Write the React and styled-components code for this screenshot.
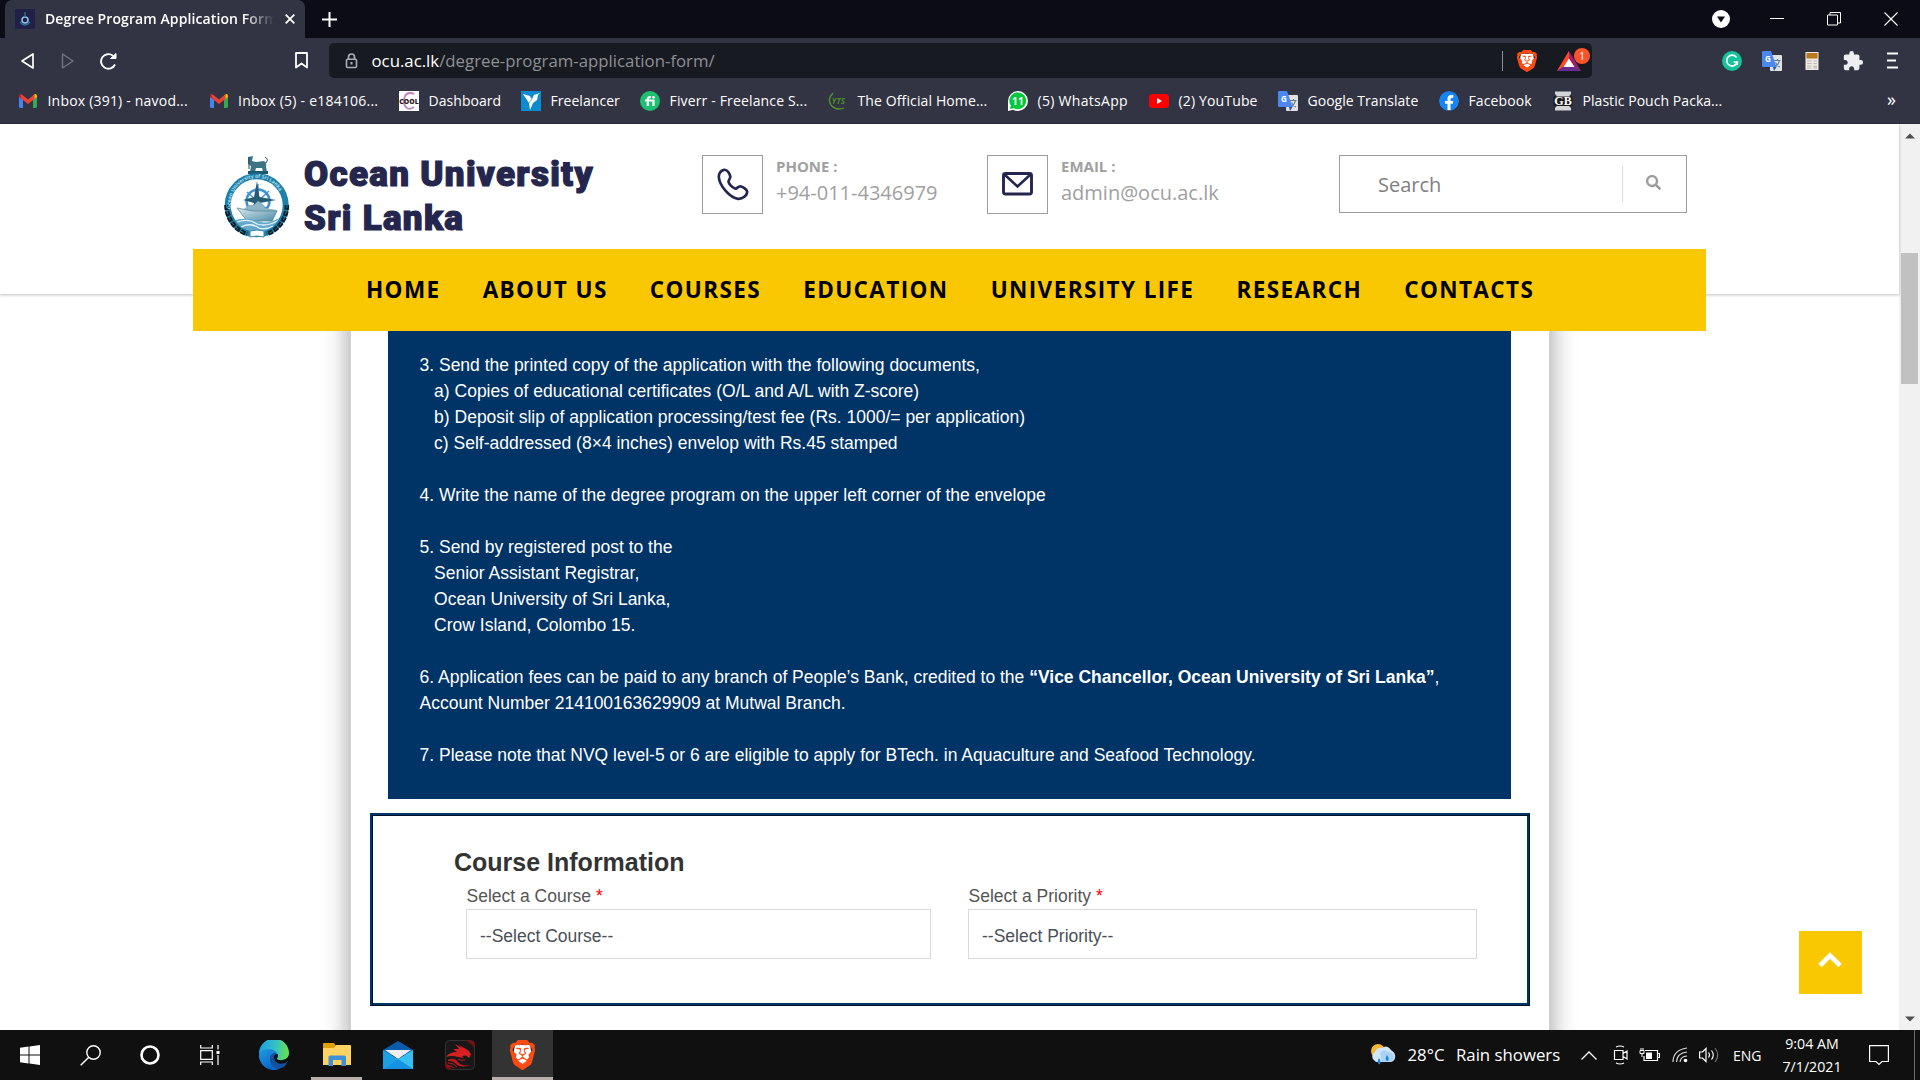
import React from "react";
import styled, { createGlobalStyle } from "styled-components";
import { SiBrave } from "react-icons/si";
import { FaFacebook, FaSearch } from "react-icons/fa";
import { MdExtension } from "react-icons/md";

const GlobalStyle = createGlobalStyle`
  * { box-sizing: border-box; }
  html, body { margin: 0; padding: 0; background: #fff; overflow: hidden; }
  svg { display: block; flex: none; }
`;

const ui = `"Open Sans", "Noto Sans", sans-serif`;
const arial = `"Liberation Sans", Arial, sans-serif`;

const Screen = styled.div`
  width: 1920px;
  height: 1080px;
  display: flex;
  flex-direction: column;
  overflow: hidden;
  font-family: ${ui};
`;

/* ---------- browser chrome ---------- */

const TabStrip = styled.div`
  height: 38px;
  flex: none;
  background: #0b0c15;
  display: flex;
  align-items: stretch;
  padding-left: 5px;
`;

const Tab = styled.div`
  width: 300px;
  background: #323443;
  border-radius: 7px 7px 0 0;
  display: flex;
  align-items: center;
  padding: 0 10px;
`;

const TabTitle = styled.div`
  width: 229px;
  margin: 0 11px 0 10px;
  padding-bottom: 2px;
  font-size: 14px;
  font-weight: 600;
  letter-spacing: 0.1px;
  color: #fff;
  white-space: nowrap;
  overflow: hidden;
  mask-image: linear-gradient(to right, #000 198px, transparent 229px);
`;

const NewTab = styled.div`
  display: flex;
  align-items: center;
  margin-left: 16px;
`;

const WindowButtons = styled.div`
  margin-left: auto;
  display: flex;
  align-items: center;
  gap: 43px;
  padding-right: 22px;
`;

const ProfileButton = styled.div`
  margin-right: -3px;
`;

const Toolbar = styled.div`
  height: 45px;
  flex: none;
  background: #323443;
  display: flex;
  align-items: center;
  padding: 0 22px 0 20px;
`;

const NavButtons = styled.div`
  width: 275px;
  display: flex;
  align-items: center;
  gap: 25px;
`;

const AddressBar = styled.div`
  width: 1263px;
  height: 35px;
  margin-left: 21px;
  border-radius: 5px;
  background: #181a21;
  display: flex;
  align-items: center;
  padding: 0 11px 0 16px;
`;

const Url = styled.div`
  margin-left: 13.500px;
  font-size: 16.8px;
  line-height: 34px;
  color: #fff;
  flex: 1;
`;

const UrlPath = styled.span`
  color: #8e9095;
`;

const AddressDivider = styled.div`
  width: 1px;
  height: 20px;
  background: #8c8d92;
  margin-right: 14px;
`;

const RewardsButton = styled.div`
  position: relative;
  margin-left: 20px;
  width: 24px;
`;

const Badge = styled.div`
  position: absolute;
  left: 17px;
  top: -3px;
  width: 16px;
  height: 16px;
  border-radius: 50%;
  background: #fb542b;
  color: #fff;
  font-size: 10px;
  line-height: 16px;
  text-align: center;
`;

const Extensions = styled.div`
  margin-left: auto;
  display: flex;
  align-items: center;
  gap: 20px;
`;

const MenuButton = styled.div`
  margin-left: 2px;
`;

const BookmarkBar = styled.div`
  height: 41px;
  flex: none;
  background: #323443;
  border-bottom: 1px solid #2a2c38;
  display: flex;
  align-items: center;
  padding: 0 20px 5px 18px;
`;

const Bookmark = styled.div`
  width: ${(p) => p.$w}px;
  display: flex;
  align-items: center;
  gap: 9.500px;
  color: #fff;
  font-size: 14px;
  letter-spacing: ${(p) => p.$track || 0}px;
  white-space: nowrap;
`;

const BookmarkLabel = styled.span`
  padding-bottom: 1px;
`;

const MoreMark = styled.div`
  margin-left: auto;
  color: #fff;
  font-size: 18px;
  line-height: 20px;
  padding-bottom: 3px;
  margin-right: 4px;
`;

/* ---------- page ---------- */

const Viewport = styled.div`
  height: 906px;
  flex: none;
  display: flex;
  overflow: hidden;
`;

const Page = styled.div`
  position: relative;
  width: 1899px;
  background: #fff;
`;

const ScrollTrack = styled.div`
  width: 21px;
  background: #f1f1f1;
  display: flex;
  flex-direction: column;
  align-items: center;
  justify-content: space-between;
  padding: 9px 0 8px;
`;

const ScrollThumb = styled.div`
  width: 17px;
  height: 131px;
  background: #c1c1c1;
  margin: 114px 0 auto;
`;

const Header = styled.header`
  position: relative;
  z-index: 2;
  height: 170px;
  background: #fff;
  box-shadow: 0 1px 3px rgba(0, 0, 0, 0.25);
`;

const HeaderTop = styled.div`
  height: 125px;
  display: flex;
  align-items: flex-start;
  padding: 31px 0 0 224px;
`;

const Logo = styled.div`
  width: 478px;
  display: flex;
`;

const LogoText = styled.div`
  margin: -2px 0 0 12px;
  font-family: Roboto, ${arial};
  font-weight: 900;
  font-size: 35px;
  line-height: 44px;
  letter-spacing: 1.3px;
  color: #25264e;
  -webkit-text-stroke: 1.2px #25264e;
`;

const Contact = styled.div`
  width: ${(p) => p.$w}px;
  display: flex;
`;

const ContactIcon = styled.div`
  width: 61px;
  height: 59px;
  border: 1px solid #9c9c9c;
  display: flex;
  align-items: center;
  justify-content: center;
`;

const ContactText = styled.div`
  margin: 1px 0 0 13px;
  color: #a0a0a0;
`;

const ContactLabel = styled.div`
  font-size: 15px;
  font-weight: 700;
  line-height: 20px;
`;

const ContactValue = styled.div`
  margin-top: 3px;
  font-size: 20px;
  line-height: 28px;
`;

const SearchBox = styled.div`
  width: 348px;
  height: 58px;
  border: 1px solid #9c9c9c;
  display: flex;
  align-items: center;
  padding: 0 25px 0 38px;
`;

const SearchText = styled.div`
  flex: 1;
  padding-top: 2px;
  font-size: 20px;
  line-height: 28px;
  color: #808080;
`;

const SearchDivider = styled.div`
  width: 1px;
  height: 36px;
  background: #dcdcdc;
  margin-right: 23px;
`;

const SearchIcon = styled.div`
  padding-bottom: 3px;
`;

const MainNav = styled.nav`
  width: 1513px;
  height: 82px;
  margin-left: 193px;
  background: #f9c802;
  display: flex;
  align-items: center;
  gap: 42.100px;
  padding: 0 0 2px 173px;
`;

const NavLink = styled.a`
  font-size: 22.5px;
  font-weight: 700;
  letter-spacing: 1.4px;
  color: #000;
  white-space: nowrap;
`;

const Article = styled.main`
  width: 1200px;
  height: 760px;
  margin-left: 350px;
  border: solid #d2d2d2;
  border-width: 0 1px;
  background: #fff;
  box-shadow: 0 0 25px rgba(0, 0, 0, 0.4);
`;

const Instructions = styled.section`
  width: 1123px;
  margin-left: 37px;
  padding: 58px 30px 31px 31.500px;
  background: #003366;
  color: #fff;
  font-family: ${arial};
  font-size: 17.5px;
  line-height: 26px;
  white-space: nowrap;
`;

const Item = styled.div`
  & + & {
    margin-top: 26px;
  }
`;

const Line = styled.div`
  padding-left: ${(p) => (p.$indent ? 14.6 : 0)}px;
`;

const FormSection = styled.section`
  width: 1160px;
  height: 193px;
  margin: 14px 0 0 19px;
  border-style: solid;
  border-width: 2px 1px 1px 2px;
  border-color: #003366 #00132b #00132b #003366;
  box-shadow: inset 1px 1px 0 #00132b, inset -2px -2px 0 #003366;
  padding: 32px 0 0 82px;
  font-family: ${arial};
`;

const FormTitle = styled.h2`
  margin: 0 0 6px;
  font-size: 25px;
  line-height: 30px;
  color: #333;
`;

const Fields = styled.div`
  display: grid;
  grid-template-columns: 465px 509px;
  column-gap: 37px;
  padding-left: 12px;
`;

const FieldLabel = styled.div`
  padding-left: 0.5px;
  font-size: 17.5px;
  line-height: 26px;
  color: #555;
`;

const Required = styled.span`
  color: #f00;
`;

const Select = styled.div`
  height: 50px;
  border: 1px solid #dadada;
  padding: 2px 0 0 13px;
  font-size: 17.5px;
  line-height: 48px;
  color: #495057;
`;

const ToTop = styled.button`
  position: absolute;
  right: 37px;
  bottom: 36px;
  width: 63px;
  height: 63px;
  border: 0;
  padding: 0 1px 5px 0;
  background: #f9c802;
  display: flex;
  align-items: center;
  justify-content: center;
`;

/* ---------- taskbar ---------- */

const Taskbar = styled.footer`
  height: 50px;
  flex: none;
  background: #101010;
  display: flex;
  color: #fff;
`;

const TaskButton = styled.div`
  width: ${(p) => p.$w || 60}px;
  margin-right: ${(p) => p.$mr || 0}px;
  padding-top: 3px;
  display: flex;
  align-items: center;
  justify-content: center;
  background: ${(p) => (p.$active ? "#333333" : "transparent")};
  border-bottom: 3px solid ${(p) => (p.$open ? "#b7aeac" : "transparent")};
`;

const Tray = styled.div`
  margin-left: auto;
  display: flex;
  align-items: center;
`;

const Weather = styled.div`
  display: flex;
  align-items: center;
  gap: 11.500px;
  font-size: 16.8px;
  padding-bottom: 1px;
  margin-right: 20px;
  width: 191px;
  white-space: nowrap;
`;

const TrayIcon = styled.div`
  width: ${(p) => p.$w}px;
`;

const Language = styled.div`
  width: 48px;
  font-size: 14px;
`;

const Clock = styled.div`
  width: 62px;
  font-size: 14.2px;
  line-height: 23px;
  text-align: center;
`;

const Notifications = styled.div`
  margin-left: 26px;
  width: 45px;
`;

const DesktopEdge = styled.div`
  width: 6px;
  height: 50px;
  border-left: 1px solid #6b6b6b;
`;

/* ---------- drawings ---------- */

const BraveMark = ({ w, h }) => (
  <svg width={w} height={h} viewBox="2 0 20 24" preserveAspectRatio="none">
    <path d="M6 4H18L19 10L15 19L12 21L9 19L5 10Z" fill="#fff" />
    <SiBrave size={24} color="#fb4b14" />
  </svg>
);

const Gmail = () => (
  <svg width="20" height="20" viewBox="0 0 20 20">
    <path d="M1 5V15.5Q1 17 2.5 17H5V8.500Z" fill="#4285f4" />
    <path d="M19 5V15.5Q19 17 17.500 17H15V8.500Z" fill="#34a853" />
    <path d="M15 4.500V9L19 6V5Q19 3 17.200 3Z" fill="#fbbc04" />
    <path d="M5 4.500V9L1 6V5Q1 3 2.800 3Z" fill="#c5221f" />
    <path d="M2.500 3L5 4.500L10 8.400L15 4.500L16.500 3.300V8L10 13L3.500 8Z" fill="#ea4335" />
  </svg>
);

const DashboardMark = () => (
  <svg width="20" height="20" viewBox="0 0 20 20">
    <rect width="20" height="20" fill="#fff" />
    <path d="M15 3Q9 0 6 5Q3 13 8 17Q11 19 15 16" fill="none" stroke="#c48abd" strokeWidth="2" />
    <text x="10" y="13" textAnchor="middle" fontFamily="Open Sans" fontSize="6.800" fontWeight="800" fill="#301824">COOL</text>
  </svg>
);

const FreelancerMark = () => (
  <svg width="20" height="20" viewBox="0 0 20 20">
    <rect width="20" height="20" fill="#0e8bce" />
    <path d="M2 3L9 5L11 8L13 4L19 2L17 4L16 9L12 12L9 19L8 12Z" fill="#fff" />
    <path d="M9 5L11 8L8 12" fill="none" stroke="#0e8bce" strokeWidth=".6" />
  </svg>
);

const FiverrMark = () => (
  <svg width="20" height="20" viewBox="0 0 20 20">
    <circle cx="10" cy="10" r="10" fill="#1dbf73" />
    <path d="M5 9.500H13.500V15M7.800 15V8Q7.800 5.800 11 6.200" fill="none" stroke="#fff" strokeWidth="2.200" />
    <circle cx="13.500" cy="6.300" r="1.300" fill="#fff" />
  </svg>
);

const YtsMark = () => (
  <svg width="20" height="20" viewBox="0 0 20 20">
    <path d="M5 2Q-1 8 3 14Q8 20 16 17" fill="none" stroke="#4f9a2d" strokeWidth="1.300" />
    <text x="10.500" y="13" textAnchor="middle" fontFamily="Open Sans" fontStyle="italic" fontSize="8" fontWeight="700" fill="#4a8b2c">YTS</text>
  </svg>
);

const WhatsAppMark = () => (
  <svg width="20" height="20" viewBox="0 0 20 20">
    <path d="M0 20V10A10 10 0 1 1 10 20Q7 20 5 18.800Z" fill="#fff" />
    <path d="M2 18L2.800 14.500A8.400 8.400 0 1 1 5.800 17.200Z" fill="#00c93c" />
    <text x="10" y="13.800" textAnchor="middle" fontFamily="Open Sans" fontSize="10" fontWeight="700" fill="#fff">11</text>
  </svg>
);

const YouTubeMark = () => (
  <svg width="20" height="20" viewBox="0 0 20 20">
    <rect y="3" width="20" height="14" rx="3.500" fill="#f00" />
    <path d="M8 7V13L13 10Z" fill="#fff" />
  </svg>
);

const TranslateMark = ({ size = 20 }) => (
  <svg width={size} height={size} viewBox="0 0 20 20">
    <rect x="8" y="4" width="12" height="16" rx="1" fill="#dfe1e3" />
    <path d="M12 9.500H18.500M15.500 8V9.500M17.500 9.500Q16.500 14 13 16M13.500 11.500Q15 15 18 16" fill="none" stroke="#5f7f93" strokeWidth="1.100" />
    <path d="M1 0H9L14.500 16H1.500Q0 16 0 14.500V1Q0 0 1 0Z" fill="#4a88f0" />
    <path d="M11 16H14.500L12 20Z" fill="#3050a8" />
    <text x="5.800" y="11" textAnchor="middle" fontFamily="Open Sans" fontSize="8" fontWeight="700" fill="#fff">G</text>
  </svg>
);

const FacebookMark = () => (
  <svg width="20" height="20" viewBox="0 0 20 20">
    <circle cx="10" cy="10" r="9.300" fill="#fff" />
    <FaFacebook size={20} color="#1485f2" />
  </svg>
);

const PouchMark = () => (
  <svg width="20" height="20" viewBox="0 0 20 20">
    <path d="M2 .5H18V3L16.500 4.500V15.500L18 17V19.500H2V17L3.500 15.500V4.500L2 3Z" fill="#d4d5d7" />
    <rect x=".5" y="5.500" width="19" height="9.500" fill="#1c1c1c" />
    <text x="10" y="14" textAnchor="middle" fontFamily="Liberation Serif" fontSize="12" fontWeight="700" fill="#fff">GB</text>
  </svg>
);

const Crest = () => (
  <svg width="68" height="86" viewBox="1 1 68 86">
    <defs>
      <path id="crestArc" d="M8.500 56A26 26 0 1 1 59 56" />
      <linearGradient id="hull" x1="0" y1="0" x2="1" y2="1">
        <stop offset="0" stopColor="#dceaf0" />
        <stop offset="1" stopColor="#4c8ca6" />
      </linearGradient>
    </defs>
    <path d="M25 3L30 2L29 7L33 8L41 7Q44 8 43 13L44 18H40L39 14L33 14L32 18H27L28 12L25 10Z" fill="#3f7487" />
    <path d="M26 3V15M42 3Q46 5 43 9" fill="none" stroke="#1d4c60" strokeWidth="1" />
    <rect x="25" y="17" width="20" height="3" fill="#1c5870" />
    <circle cx="33.700" cy="51.300" r="29" fill="#fff" stroke="#1c80a8" strokeWidth="6" />
    <path d="M3.500 51A30.200 30.200 0 0 0 24 80" fill="none" stroke="#0a1f29" strokeWidth="4.500" strokeDasharray="5 1.200" />
    <path d="M63.900 51A30.200 30.200 0 0 1 44 80" fill="none" stroke="#0a1f29" strokeWidth="4.500" strokeDasharray="5 1.200" />
    <path d="M3.500 51A30.200 30.200 0 0 0 24 80M63.900 51A30.200 30.200 0 0 1 44 80" fill="none" stroke="#2f7f9e" strokeWidth="1" strokeDasharray="3 3.200" />
    <text fontFamily="Open Sans" fontSize="5" fontWeight="700" fill="#b4dcea">
      <textPath href="#crestArc" startOffset="1">Ocean University of Sri Lanka</textPath>
    </text>
    <circle cx="35" cy="47" r="11.500" fill="none" stroke="#3c91d2" strokeWidth="2.500" />
    <path d="M35 30V62M24 38L46 57M46 37L25 56" stroke="#3c91d2" strokeWidth="1.300" />
    <path d="M34 27L36.500 43L53 46L37 49L35 60L31 49L20 46L31 43Z" fill="#275d74" />
    <path d="M21 55L26 51H31L35 47L40 50L42 54L54 56L50 66L23 69Z" fill="#8fb4c4" />
    <path d="M14 54L30 57L54 57L49 67H24Z" fill="url(#hull)" stroke="#4b7f94" strokeWidth=".7" />
    <path d="M12 66Q25 63 34 67Q44 71 56 64Q49 78 34 78Q18 77 12 66Z" fill="#64a9cb" />
    <path d="M14 68Q26 64 34 70Q44 73 54 67M18 73Q28 68 36 74Q43 76 50 72" fill="none" stroke="#e4f3fa" strokeWidth="1.300" />
    <path d="M27 77L34 76L41 77V83L34 82L27 83Z" fill="#fff" stroke="#3b87a5" strokeWidth="1" />
  </svg>
);

const PhoneIcon = () => (
  <svg width="32" height="33" viewBox="0 0 32 33">
    <path
      d="M7 1.800C3.500 2.300 1.600 6 1.800 9C2.500 18 13 29.800 21 30.800C25.500 31.200 30.200 27.500 30.200 23.500C29.500 21 25 18 22.500 18.500C20.500 19 20 21 18 20.500C15 19.500 11.500 15.500 11.500 13.500C11.500 12 13.300 11 13.300 8.500C12.800 6 10.500 1.300 7 1.800Z"
      fill="none" stroke="#25264e" strokeWidth="2.700" />
  </svg>
);

const MailIcon = () => (
  <svg width="31" height="26" viewBox="0 0 31 26">
    <rect x="1.500" y="1.500" width="28" height="20.500" rx="2" fill="none" stroke="#25264e" strokeWidth="2.900" />
    <path d="M2.500 2.500L15.500 14.500L28.500 2.500" fill="none" stroke="#25264e" strokeWidth="2.600" />
  </svg>
);

const Edge = () => (
  <svg width="30" height="30" viewBox="0 0 30 30">
    <defs>
      <linearGradient id="edgeTop" x1="0" y1=".3" x2="1" y2=".4">
        <stop offset="0" stopColor="#1b9de2" />
        <stop offset=".55" stopColor="#35c1c8" />
        <stop offset="1" stopColor="#66e24a" />
      </linearGradient>
      <linearGradient id="edgeSide" x1="0" y1="0" x2=".6" y2="1">
        <stop offset="0" stopColor="#1f9ce5" />
        <stop offset="1" stopColor="#0b63c4" />
      </linearGradient>
    </defs>
    <circle cx="15" cy="15" r="15" fill="#0f4f9e" />
    <path d="M0 14A15 15 0 0 1 30 13Q30 20 22 20.500Q17.500 20.500 18 18.500Q20 16 18 13.500Q14 9 8 10Q2 11 0 14Z" fill="url(#edgeTop)" />
    <path d="M0 15Q2 9 9 9Q16 9 18.500 14Q12 11.500 11 18Q11 26 19 29.400Q16 30 14 30A15 15 0 0 1 0 15Z" fill="url(#edgeSide)" />
    <path d="M30 20Q26 23.500 20 22.500L18 18.800Q19 20.500 22 20.500Q28 20.500 30 15Z" fill="#101010" />
    <path d="M19 29.500Q25 28 28 23L31 19V31H19Z" fill="#101010" />
    <path d="M11 18Q11 26 18 29Q25 28 28 23.500Q20 26 16 20Q15 17 17 14Q12 13 11 18Z" fill="#10529f" />
    <path d="M18.500 14Q15 14 15 17.500Q15.500 22 20 23.500Q24 24.500 28 22L30 18L22 20.500Q17.500 20.500 18 18.500Q19.500 16.500 18.500 14Z" fill="#101010" />
  </svg>
);

const Explorer = () => (
  <svg width="28" height="24" viewBox="0 0 28 24">
    <path d="M0 1Q0 0 1 0H11L13 3V8H0Z" fill="#e0a200" />
    <path d="M0 5H11L13 2H27Q28 2 28 3V22H0Z" fill="#ffd262" />
    <path d="M5.500 23V14Q5.500 12.500 7 12.500H21.500Q23 12.500 23 14V23H18.500V17H10V23Z" fill="#3d92d6" />
  </svg>
);

const MailApp = () => (
  <svg width="30" height="28" viewBox="0 0 30 28">
    <path d="M0 9L15 0L30 9V14H0Z" fill="#0b5cad" />
    <path d="M2 9H28L15 18Z" fill="#eeeef0" />
    <path d="M0 28V9L15 18L30 28Z" fill="#1ba0e6" />
    <path d="M0 28L15 18L30 9V28Z" fill="#36c0f4" />
    <path d="M0 28L15 18L30 28Z" fill="#1593e2" />
  </svg>
);

const Dragon = () => (
  <svg width="30" height="30" viewBox="0 0 30 30">
    <rect x=".5" y=".5" width="29" height="29" rx="4" fill="#181818" stroke="#333" />
    <path d="M20 .5H26Q29.500 1 29.500 5V9Q27 3 20 .5Z" fill="#7d0b12" />
    <path d="M.5 20V26Q1 29.500 5 29.500H8Q3 26 .5 20Z" fill="#7d0b12" />
    <path d="M1 17Q4 12 12 12L8 9L14 9L10 4L17 8L14 5L21 9Q24 10 26 14L24 18L21 15.500L17 16L19 18L13 17Q7 15 1 17Z" fill="#d81f22" />
    <path d="M3 19.500Q10 17 13 22Q16 26.500 26 25Q15 28.500 11 24Q8 20.500 3 21Z" fill="#b9191d" />
    <path d="M3 23Q9 23 12 27M2 26Q6 25 9 28M13 19Q16 21 20 20" stroke="#b9191d" fill="none" />
  </svg>
);

const WeatherIcon = () => (
  <svg width="26" height="21" viewBox="0 0 26 21">
    <circle cx="8" cy="7" r="7" fill="#f7b733" />
    <path d="M5 17A5 5 0 0 1 5 8Q7 3 12 4Q17 0 21 6Q26 9 25 14Q24 18 20 18H6Z" fill="#cfe6fb" />
    <path d="M10 9Q14 4 19 8Q25 10 24 14Q23 18 19 18H12Z" fill="#a9d2f7" />
    <path d="M9 14Q12 18 9.500 20.500Q6 19 9 14ZM17 11Q20 15 17.500 17Q14 16 17 11Z" fill="#1b83dc" />
  </svg>
);

const bookmarks = [
  [190.5, 0.2, <Gmail />, "Inbox (391) - navod..."],
  [190.5, 0.22, <Gmail />, "Inbox (5) - e184106..."],
  [122, 0.05, <DashboardMark />, "Dashboard"],
  [119, 0.05, <FreelancerMark />, "Freelancer"],
  [188, 0.15, <FiverrMark />, "Fiverr - Freelance S..."],
  [180, 0.12, <YtsMark />, "The Official Home..."],
  [141, 0.3, <WhatsAppMark />, "(5) WhatsApp"],
  [129, 0.15, <YouTubeMark />, "(2) YouTube"],
  [161, 0.03, <TranslateMark />, "Google Translate"],
  [114, 0.1, <FacebookMark />, "Facebook"],
  [170, 0.05, <PouchMark />, "Plastic Pouch Packa..."],
];

const links = ["HOME", "ABOUT US", "COURSES", "EDUCATION", "UNIVERSITY LIFE", "RESEARCH", "CONTACTS"];

const Browser = () => (
  <>
    <TabStrip>
      <Tab>
        <svg width="20" height="20" viewBox="0 0 20 20">
          <rect width="20" height="20" fill="#202149" />
          <circle cx="10" cy="11" r="3" fill="none" stroke="#8fc4e8" strokeWidth="1.500" />
          <path d="M10 3V8M5 13Q10 19 15 13" fill="none" stroke="#2f7193" strokeWidth="1.300" />
        </svg>
        <TabTitle>Degree Program Application Form</TabTitle>
        <svg width="10" height="10" viewBox="0 0 10 10">
          <path d="M.7 .7L9.300 9.300M9.300 .7L.7 9.300" stroke="#fff" strokeWidth="1.800" />
        </svg>
      </Tab>
      <NewTab>
        <svg width="17" height="17" viewBox="0 0 17 17">
          <path d="M8.500 1V16M1 8.500H16" stroke="#fff" strokeWidth="2" />
        </svg>
      </NewTab>
      <WindowButtons>
        <ProfileButton>
          <svg width="18" height="18" viewBox="0 0 18 18">
            <circle cx="9" cy="9" r="9" fill="#fff" />
            <path d="M5 6.500H13L9 12.500Z" fill="#0b0c15" />
          </svg>
        </ProfileButton>
        <svg width="14" height="14" viewBox="0 0 14 14">
          <path d="M0 6.500H14" stroke="#fff" />
        </svg>
        <svg width="14" height="14" viewBox="0 0 14 14">
          <path d="M.5 3H10.500V13H.5ZM3 3V.5H13.500V11H10.500" fill="none" stroke="#fff" />
        </svg>
        <svg width="14" height="14" viewBox="0 0 14 14">
          <path d="M.5 .5L13.500 13.500M13.500 .5L.5 13.500" stroke="#fff" strokeWidth="1.100" />
        </svg>
      </WindowButtons>
    </TabStrip>
    <Toolbar>
      <NavButtons>
        <svg width="15" height="18" viewBox="0 0 15 18">
          <path d="M13 2V16L2 9Z" fill="none" stroke="#fff" strokeWidth="1.700" strokeLinejoin="round" />
        </svg>
        <svg width="14" height="18" viewBox="0 0 14 18">
          <path d="M2.500 2V16L13 9Z" fill="none" stroke="#72747f" strokeWidth="1.400" strokeLinejoin="round" />
        </svg>
        <svg width="18" height="18" viewBox="0 0 18 18">
          <path d="M16 12.500A7.300 7.300 0 1 1 14 3.800" fill="none" stroke="#fff" strokeWidth="1.900" />
          <path d="M17 1.500V6.500H11.500Z" fill="#fff" stroke="#fff" strokeLinejoin="round" />
        </svg>
      </NavButtons>
      <svg width="13" height="17" viewBox="0 0 13 17">
        <path d="M1 1H12V15.500L6.500 11.500L1 15.500Z" fill="none" stroke="#fff" strokeWidth="1.800" strokeLinejoin="round" />
      </svg>
      <AddressBar>
        <svg width="13" height="16" viewBox="0 0 13 16">
          <path d="M3.500 6V4A3 3 0 0 1 9.500 4V6" fill="none" stroke="#a9abb2" strokeWidth="1.700" />
          <rect x="1.500" y="6.200" width="10" height="8.300" rx="1" fill="none" stroke="#a9abb2" strokeWidth="1.600" />
          <rect x="5.500" y="9" width="2" height="2.500" fill="#a9abb2" />
        </svg>
        <Url>ocu.ac.lk<UrlPath>/degree-program-application-form/</UrlPath></Url>
        <AddressDivider />
        <BraveMark w={20} h={22} />
        <RewardsButton>
          <svg width="24" height="20" viewBox="0 0 24 20">
            <path d="M12 0L24 20H0Z" fill="#9e1f63" />
            <path d="M12 0L0 20L12 12Z" fill="#ff4724" />
            <path d="M0 20L12 12L24 20Z" fill="#662d91" />
            <path d="M12 7.500L17.500 16H6.500Z" fill="#fff" />
          </svg>
          <Badge>1</Badge>
        </RewardsButton>
      </AddressBar>
      <Extensions>
        <svg width="20" height="20" viewBox="0 0 20 20">
          <circle cx="10" cy="10" r="10" fill="#15c39a" />
          <path d="M14.500 6.500A5.400 5.400 0 1 0 15.300 11H11.500M15.300 10.500V14" fill="none" stroke="#fff" strokeWidth="1.700" />
        </svg>
        <TranslateMark />
        <svg width="20" height="20" viewBox="0 0 20 20">
          <rect x="3.500" y="1" width="13" height="18" fill="#eee9e2" />
          <rect x="4.500" y="2" width="11" height="5.500" fill="#b87a1d" />
          <path d="M5 10H9.500M5 12.500H9.500M5 15H9.500M5 17H9.500M11.500 10H15M11.500 12.500H15" stroke="#bbb" />
          <path d="M11.500 14.500H15V17.500H11.500Z" fill="#c5c0b8" />
        </svg>
        <MdExtension size={22} color="#eceef0" />
        <MenuButton>
          <svg width="12" height="17" viewBox="0 0 12 17">
            <path d="M1 1.500H12M1 8.500H10M1 15.500H12" stroke="#fff" strokeWidth="1.800" />
          </svg>
        </MenuButton>
      </Extensions>
    </Toolbar>
    <BookmarkBar>
      {bookmarks.map(([w, track, icon, label]) => (
        <Bookmark key={label} $w={w} $track={track}>{icon}<BookmarkLabel>{label}</BookmarkLabel></Bookmark>
      ))}
      <MoreMark>»</MoreMark>
    </BookmarkBar>
  </>
);

const SiteHeader = () => (
  <Header>
    <HeaderTop>
      <Logo>
        <Crest />
        <LogoText>Ocean University<br />Sri Lanka</LogoText>
      </Logo>
      <Contact $w={285}>
        <ContactIcon><PhoneIcon /></ContactIcon>
        <ContactText>
          <ContactLabel>PHONE :</ContactLabel>
          <ContactValue>+94-011-4346979</ContactValue>
        </ContactText>
      </Contact>
      <Contact $w={352}>
        <ContactIcon><MailIcon /></ContactIcon>
        <ContactText>
          <ContactLabel>EMAIL :</ContactLabel>
          <ContactValue>admin@ocu.ac.lk</ContactValue>
        </ContactText>
      </Contact>
      <SearchBox>
        <SearchText>Search</SearchText>
        <SearchDivider />
        <SearchIcon><FaSearch size={15} color="#9c9c9c" /></SearchIcon>
      </SearchBox>
    </HeaderTop>
    <MainNav>
      {links.map((l) => <NavLink key={l}>{l}</NavLink>)}
    </MainNav>
  </Header>
);

export default function App() {
  return (
    <Screen>
      <GlobalStyle />
      <Browser />
      <Viewport>
        <Page>
          <SiteHeader />
          <Article>
            <Instructions>
              <Item>
                <Line>3. Send the printed copy of the application with the following documents,</Line>
                <Line $indent>a) Copies of educational certificates (O/L and A/L with Z-score)</Line>
                <Line $indent>b) Deposit slip of application processing/test fee (Rs. 1000/= per application)</Line>
                <Line $indent>c) Self-addressed (8×4 inches) envelop with Rs.45 stamped</Line>
              </Item>
              <Item>
                <Line>4. Write the name of the degree program on the upper left corner of the envelope</Line>
              </Item>
              <Item>
                <Line>5. Send by registered post to the</Line>
                <Line $indent>Senior Assistant Registrar,</Line>
                <Line $indent>Ocean University of Sri Lanka,</Line>
                <Line $indent>Crow Island, Colombo 15.</Line>
              </Item>
              <Item>
                <Line>6. Application fees can be paid to any branch of People’s Bank, credited to the <b>“Vice Chancellor, Ocean University of Sri Lanka”</b>,</Line>
                <Line>Account Number 214100163629909 at Mutwal Branch.</Line>
              </Item>
              <Item>
                <Line>7. Please note that NVQ level-5 or 6 are eligible to apply for BTech. in Aquaculture and Seafood Technology.</Line>
              </Item>
            </Instructions>
            <FormSection>
              <FormTitle>Course Information</FormTitle>
              <Fields>
                <div>
                  <FieldLabel>Select a Course <Required>*</Required></FieldLabel>
                  <Select>--Select Course--</Select>
                </div>
                <div>
                  <FieldLabel>Select a Priority <Required>*</Required></FieldLabel>
                  <Select>--Select Priority--</Select>
                </div>
              </Fields>
            </FormSection>
          </Article>
          <ToTop>
            <svg width="24" height="16" viewBox="0 0 24 16">
              <path d="M2 13.500L12 3.500L22 13.500" fill="none" stroke="#fff" strokeWidth="4.600" />
            </svg>
          </ToTop>
        </Page>
        <ScrollTrack>
          <svg width="10" height="6" viewBox="0 0 10 6"><path d="M0 5.500L5 .5L10 5.500Z" fill="#505050" /></svg>
          <ScrollThumb />
          <svg width="10" height="6" viewBox="0 0 10 6"><path d="M0 .5L5 5.500L10 .5Z" fill="#505050" /></svg>
        </ScrollTrack>
      </Viewport>
      <Taskbar>
        <TaskButton>
          <svg width="20" height="20" viewBox="0 0 20 20">
            <path d="M0 2.800L8.500 1.600V9.500H0ZM9.500 1.400L20 0V9.500H9.500ZM0 10.500H8.500V18.400L0 17.200ZM9.500 10.500H20V20L9.500 18.600Z" fill="#fff" />
          </svg>
        </TaskButton>
        <TaskButton>
          <svg width="21" height="21" viewBox="0 0 21 21">
            <circle cx="13.500" cy="7.500" r="6.700" fill="none" stroke="#fff" strokeWidth="1.400" />
            <path d="M8.800 12.200L.7 20.300" stroke="#fff" strokeWidth="1.500" />
          </svg>
        </TaskButton>
        <TaskButton>
          <svg width="20" height="20" viewBox="0 0 20 20">
            <circle cx="10" cy="10" r="8.500" fill="none" stroke="#fff" strokeWidth="2.600" />
          </svg>
        </TaskButton>
        <TaskButton $mr={3}>
          <svg width="20" height="20" viewBox="0 0 20 20">
            <path d="M.7 0V3H12.300V0M.7 20V17H12.300V20M.7 5.700H12.300V14.300H.7ZM18 0V4.500M18 10V20" fill="none" stroke="#fff" strokeWidth="1.200" />
            <rect x="16.500" y="6" width="3" height="3" fill="#fff" />
          </svg>
        </TaskButton>
        <TaskButton $w={62} $mr={6}><Edge /></TaskButton>
        <TaskButton $w={51} $open $mr={6}><Explorer /></TaskButton>
        <TaskButton $mr={1}><MailApp /></TaskButton>
        <TaskButton $w={62} $mr={1}><Dragon /></TaskButton>
        <TaskButton $w={61} $active $open><BraveMark w={25} h={30} /></TaskButton>
        <Tray>
          <Weather>
            <WeatherIcon />
            <span>28°C</span>
            <span>Rain showers</span>
          </Weather>
          <TrayIcon $w={31}>
            <svg width="16" height="9" viewBox="0 0 16 9"><path d="M.5 8.500L8 1L15.500 8.500" fill="none" stroke="#fff" strokeWidth="1.300" /></svg>
          </TrayIcon>
          <TrayIcon $w={27}>
            <svg width="16" height="20" viewBox="0 0 16 20">
              <path d="M2.500 5.500H11V14.500H2.500ZM11 8.500L15 6V14L11 11.500M4 2Q8 0 12 2M4 18Q8 20 12 18" fill="none" stroke="#fff" strokeWidth="1.200" />
            </svg>
          </TrayIcon>
          <TrayIcon $w={33}>
            <svg width="21" height="14" viewBox="0 0 21 14">
              <path d="M6 2.500H18.500V12.500H5V8M19 5.500H20.500V9.500H19" fill="none" stroke="#fff" strokeWidth="1.200" />
              <rect x="7" y="4.500" width="6" height="6.500" fill="#fff" />
              <path d="M1 2.500H5V5.500H1ZM2 0V2.500M4 0V2.500M3 5.500V9" fill="none" stroke="#fff" />
            </svg>
          </TrayIcon>
          <TrayIcon $w={27}>
            <svg width="16" height="16" viewBox="0 0 16 16">
              <path d="M1 15Q1 3 15 1M4.500 15Q5 6 15 5M8 15Q8.500 9.500 15 9" fill="none" stroke="#d8d8d8" strokeWidth="1.200" />
              <circle cx="13.500" cy="13.500" r="1.800" fill="#fff" />
            </svg>
          </TrayIcon>
          <TrayIcon $w={34}>
            <svg width="20" height="18" viewBox="0 0 20 18">
              <path d="M.6 6H3.500L7 2.500V15.500L3.500 12H.6Z" fill="none" stroke="#fff" strokeWidth="1.200" />
              <path d="M9.500 6.500Q11.500 9 9.500 11.500M12.500 4.500Q16 9 12.500 13.500" fill="none" stroke="#fff" strokeWidth="1.100" />
              <path d="M16 2Q21.500 9 16 16" fill="none" stroke="#777" strokeWidth="1.100" />
            </svg>
          </TrayIcon>
          <Language>ENG</Language>
          <Clock>9:04 AM<br />7/1/2021</Clock>
          <Notifications>
            <svg width="20" height="21" viewBox="0 0 20 21">
              <path d="M.6 .6H19.400V16.500H13L10 19.500L7 16.500H.6Z" fill="none" stroke="#fff" strokeWidth="1.200" />
            </svg>
          </Notifications>
          <DesktopEdge />
        </Tray>
      </Taskbar>
    </Screen>
  );
}
